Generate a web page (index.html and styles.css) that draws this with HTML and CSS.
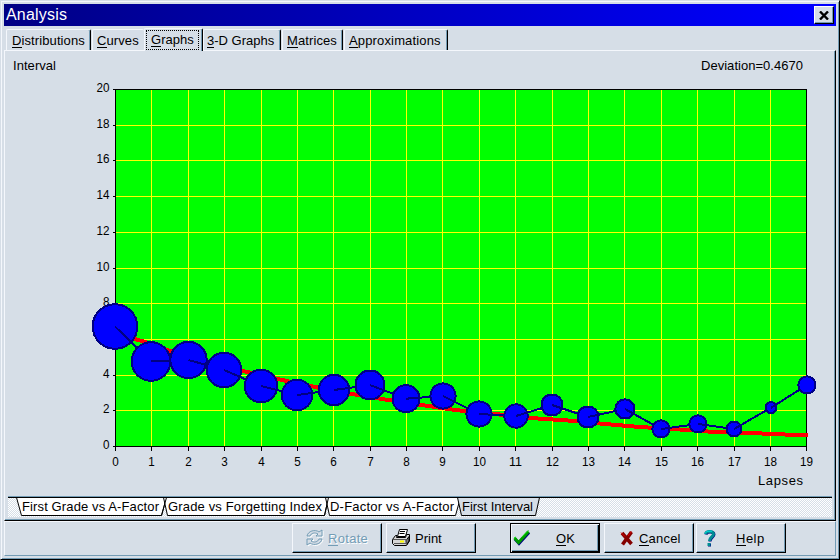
FILE: index.html
```
<!DOCTYPE html>
<html lang="en">
<head>
    <meta charset="UTF-8">
    <meta name="viewport" content="width=device-width, initial-scale=1.0">
    <title>Analysis</title>
    <link rel="stylesheet" href="styles.css">
</head>
<body>
    <div class="window">
        <header class="titlebar">
            <h1>Analysis</h1>
            <button class="close" aria-label="Close">
                <svg width="10" height="9" viewBox="0 0 10 9"><path d="M1 0.5L9 8.5M9 0.5L1 8.5" stroke="#000" stroke-width="2.4"/></svg>
            </button>
        </header>

        <nav class="tabs">
            <a class="tab distributions"><span><u>D</u>istributions</span></a>
            <a class="tab curves"><span><u>C</u>urves</span></a>
            <a class="tab graphs active"><span><u>G</u>raphs</span></a>
            <a class="tab graphs3d"><span><u>3</u>-D Graphs</span></a>
            <a class="tab matrices"><span><u>M</u>atrices</span></a>
            <a class="tab approx"><span><u>A</u>pproximations</span></a>
        </nav>

        <main class="panel">
            <svg class="chart" width="829" height="445" viewBox="5 51 829 445">
                <text x="13" y="70" textLength="43">Interval</text>
                <text x="701" y="70" textLength="102">Deviation=0.4670</text>
                <rect x="115" y="89" width="692" height="358" fill="#00ff00"/>
                <g id="grid"></g>
                <g id="axis"></g>
                <polyline class="fit" points="115,328 133,338.5 145,342 170,351 205,361 243,371 282,380 320,388 352,394 385,399.5 425,405.5 455,410 495,414 530,418 575,421 605,424 640,427 680,429.5 715,432 750,433 808,435.5"/>
                <g id="points"></g>
                <text x="758" y="485" textLength="45">Lapses</text>
            </svg>

            <svg class="sheets" width="824" height="22" viewBox="8 496 824 22">
                <defs>
                    <pattern id="dots" width="2" height="2" patternUnits="userSpaceOnUse">
                        <rect width="2" height="2" fill="#d6dee7"/>
                        <rect width="1" height="1" fill="#fff"/>
                        <rect x="1" y="1" width="1" height="1" fill="#fff"/>
                    </pattern>
                </defs>
                <rect x="8" y="498" width="824" height="19" fill="url(#dots)"/>
                <path class="sheet" d="M16.5 497.5L21.5 515.5H161.5L166.5 497.5"/>
                <path class="sheet" d="M163.5 497.5L167.5 515.5H324.5L328.5 497.5"/>
                <path class="sheet" d="M325.5 497.5L329.5 515.5H455.5L460.5 497.5"/>
                <path class="sheet current" d="M457.5 497.5L461.5 515.5H535.5L539.5 497.5"/>
                <path class="edge" d="M161.5 515.5L166.5 497.5M324.5 515.5L328.5 497.5"/>
                <path class="shade" d="M8 496.5H832"/>
                <path class="edge" d="M8 497.5H832"/>
                <text x="22" y="511" textLength="137">First Grade vs A-Factor</text>
                <text x="168" y="511" textLength="154">Grade vs Forgetting Index</text>
                <text x="330" y="511" textLength="124">D-Factor vs A-Factor</text>
                <text x="462" y="511" textLength="71">First Interval</text>
            </svg>
        </main>

        <footer class="buttons">
            <button class="btn rotate">
                <svg width="18" height="18" viewBox="0 0 18 18">
                    <g fill="none" stroke="#fff" transform="translate(1 1)">
                        <path d="M1 7C2 2 9 0 13 3L16 1V7H10L12 5C9 3 5 4 4 7ZM16 10C15 15 8 17 4 14L1 16V10H7L5 12C8 14 12 13 13 10Z"/>
                    </g>
                    <g fill="#d6dee7" stroke="#739cb5">
                        <path d="M1 7C2 2 9 0 13 3L16 1V7H10L12 5C9 3 5 4 4 7ZM16 10C15 15 8 17 4 14L1 16V10H7L5 12C8 14 12 13 13 10Z"/>
                    </g>
                </svg>
                <span><u>R</u>otate</span>
            </button>
            <button class="btn print">
                <svg width="19" height="18" viewBox="0 0 19 18">
                    <path d="M5.500 7.500L7.500 0.500H15.500L13.500 7.500Z" fill="#fff" stroke="#000"/>
                    <path d="M8 2.500H13M7.500 4.500H12.500" stroke="#000"/>
                    <path d="M0.500 10.500L3.500 6.500H5L4.500 8.500H13.500L14.500 5.500H17.500V12L14.500 16.500H2.500L0.500 14.500Z" fill="#d6d6d6" stroke="#000"/>
                    <path d="M14 11.500L17 7.500V12L14.500 16Z" fill="#808080" stroke="#000"/>
                    <path d="M1 10.500H14.500V16.500M2 14.500H14" fill="none" stroke="#555"/>
                    <path d="M8 12.500H12" stroke="#ff0" stroke-width="2"/>
                </svg>
                <span>Print</span>
            </button>
            <button class="btn ok">
                <svg width="18" height="16" viewBox="0 0 18 16">
                    <path d="M2 9L6 13.500L16 2.500" fill="none" stroke="#000080" stroke-width="3"/>
                    <path d="M1.500 8L5.500 12.500L15.500 1.500" fill="none" stroke="#009c00" stroke-width="3"/>
                    <path d="M1 8L3 7M9 7L15.500 0.500" stroke="#00e000"/>
                </svg>
                <span><u>O</u>K</span>
            </button>
            <button class="btn cancel">
                <svg width="14" height="15" viewBox="0 0 14 15">
                    <path d="M2 2L11.500 13M11.500 1L2.500 13.500" stroke="#840000" stroke-width="3.600"/>
                    <path d="M1 1.500L5 5.500M8 5L11.500 0.500" stroke="#e00000"/>
                </svg>
                <span><u>C</u>ancel</span>
            </button>
            <button class="btn help">
                <svg width="12" height="17" viewBox="0 0 12 17">
                    <path d="M2 4.500C2.500 1.500 10 1 10 4.500C10 7 6 7.500 6 11.500M4 15H7" fill="none" stroke="#000080" stroke-width="3"/>
                    <path d="M1.500 4C2 1 9.500 0.500 9.500 4C9.500 7 5.500 7 5.500 11M3.500 14.500H6.500" fill="none" stroke="#008c94" stroke-width="3"/>
                    <path d="M1 3.500L3 1.200H8" fill="none" stroke="#00e7e7"/>
                </svg>
                <span><u>H</u>elp</span>
            </button>
        </footer>
    </div>

    <script>
        // x, y and radius of each lapse group
        const points = [
            [115, 326.5, 22.3], [151, 361.5, 19.3], [188.5, 360, 18.2], [224, 370, 17.3],
            [261, 386, 16.3], [297, 395, 15.3], [334, 390, 15.2], [370, 385, 14.5],
            [406, 398.7, 13.5], [443, 396, 12.6], [479, 414, 12.6], [516, 416, 11.7],
            [552, 405, 10.5], [588, 417, 10.5], [625, 409, 9.6], [661, 429, 8.6],
            [698, 424, 8.6], [734, 429, 7.5], [771, 407.7, 5.5], [807, 385, 8.6]
        ];

        let grid = '';
        let axis = '';
        for (let i = 0; i < 20; i++) {
            const x = Math.round(115 + i * 36.4 - 0.1) + 0.5;
            const px = Math.min(x, 806.5);
            const w = i < 10 ? 6.5 : 13;
            if (i > 0 && i < 19) {
                grid += `<path d="M${px} 89V446"/>`;
            }
            axis += `<path d="M${px} 446V451"/>`;
            axis += `<text x="${px - w / 2}" y="466" textLength="${w}" lengthAdjust="spacingAndGlyphs">${i}</text>`;
        }
        for (let i = 0; i <= 10; i++) {
            const y = Math.round(446 - i * 35.7) + 0.5;
            const w = i < 5 ? 6.5 : 13;
            if (i > 0 && i < 10) {
                grid += `<path d="M115 ${y}H806"/>`;
            }
            axis += `<path d="M113 ${y}H116"/>`;
            axis += `<text x="${109.5 - w}" y="${y + 2.5}" textLength="${w}" lengthAdjust="spacingAndGlyphs">${i * 2}</text>`;
        }
        axis += '<path d="M115.5 89.5H806.5V446.5H115.5Z" fill="none"/>';

        let dots = '';
        points.forEach(function(p, i) {
            dots += `<circle cx="${p[0]}" cy="${p[1]}" r="${p[2]}"/>`;
            const next = points[i + 1];
            if (next) {
                dots += `<path d="M${p[0]} ${p[1]}L${next[0]} ${next[1]}"/>`;
            }
        });

        document.getElementById('grid').innerHTML = grid;
        document.getElementById('axis').innerHTML = axis;
        document.getElementById('points').innerHTML = dots;
    </script>
</body>
</html>
```
FILE: styles.css
```
* {
    margin: 0;
    padding: 0;
    box-sizing: border-box;
}

body {
    width: 840px;
    height: 560px;
    overflow: hidden;
    background-color: #d6dee7;
    font-family: "Liberation Sans", Arial, sans-serif;
    font-size: 13px;
    color: #000;
}

.window {
    display: flex;
    flex-direction: column;
    width: 840px;
    height: 560px;
    padding: 3px 3px 2px 2px;
    border-left: 1px solid #d6dee7;
    border-top: 1px solid #d6dee7;
    border-right: 1px solid #000;
    border-bottom: 1px solid #000;
    box-shadow: inset 1px 1px #f4f7fc, inset -1px -1px #739cb5;
}

.titlebar {
    display: flex;
    align-items: center;
    justify-content: space-between;
    width: 832px;
    height: 22px;
    margin-left: 1px;
    padding: 0 2px;
    background: linear-gradient(90deg, #000084, #0000ff 97%);
}

.titlebar h1 {
    font-size: 16px;
    font-weight: normal;
    letter-spacing: 0.2px;
    line-height: 22px;
    color: #fff;
}

.close {
    display: flex;
    align-items: center;
    justify-content: center;
    width: 20px;
    height: 18px;
    border: 1px solid #000;
    border-top-color: #fff;
    border-left-color: #fff;
    background-color: #d6dee7;
    box-shadow: inset -1px -1px #739cb5;
}

.tabs {
    display: flex;
    align-items: flex-end;
    height: 24px;
    padding-left: 3px;
}

.tab {
    display: flex;
    height: 21px;
    padding-top: 3px;
    line-height: 15px;
    white-space: nowrap;
    border-top: 1px solid #f4f7fc;
    border-left: 1px solid #f4f7fc;
    border-right: 1px solid #000;
    border-radius: 2px 2px 0 0;
    box-shadow: inset -1px 0 #739cb5;
}

u {
    text-decoration: none;
    box-shadow: 0 1px #000;
    display: inline-block;
    height: 14px;
    line-height: 15px;
}

.distributions { width: 85px; margin-right: 1px; padding-left: 5px; letter-spacing: 0.1px; }
.curves { width: 52px; border-right: none; box-shadow: none; padding-left: 4px; letter-spacing: 0.1px; }
.graphs { width: 59px; padding-left: 1px; }
.graphs3d { width: 78px; margin-right: 1px; padding-left: 3px; }
.matrices { width: 61px; margin-right: 1px; padding-left: 4px; letter-spacing: 0.1px; }
.approx { width: 104px; padding-left: 4px; letter-spacing: 0.15px; }

.tab.active {
    height: 23px;
    margin-bottom: -1px;
    padding-top: 1px;
    position: relative;
    background-color: #d6dee7;
}

.tab.active span {
    height: 20px;
    padding: 1px 4px 0;
    border: 1px dotted #000;
}

.panel {
    width: 832px;
    height: 471px;
    margin-left: 1px;
    border-top: 1px solid #f4f7fc;
    border-left: 1px solid #f4f7fc;
    border-right: 1px solid #000;
    border-bottom: 1px solid #000;
    box-shadow: inset -1px -1px #739cb5;
}

.chart {
    display: block;
    shape-rendering: crispEdges;
}

.chart #grid {
    stroke: #ffff00;
}

.chart #axis path {
    stroke: #000;
}

.chart .fit {
    fill: none;
    stroke: #ff0000;
    stroke-width: 4;
}

.chart #points {
    fill: #0000ff;
    stroke: #000084;
    stroke-width: 2;
}

.sheets {
    display: block;
    margin-left: 3px;
}

.sheet {
    fill: #fff;
    stroke: #000;
}

.sheet.current {
    fill: #d6dee7;
}

.edge {
    fill: none;
    stroke: #000;
}

.shade {
    stroke: #739cb5;
}

.buttons {
    display: flex;
    width: 832px;
    height: 35px;
    margin-left: 1px;
    padding: 2px 0 0 288px;
    border-top: 1px solid #f4f7fc;
    border-left: 1px solid #f4f7fc;
    border-right: 1px solid #739cb5;
    border-bottom: 1px solid #739cb5;
}

.btn {
    display: flex;
    align-items: center;
    width: 90px;
    height: 30px;
    margin-top: -1px;
    font: inherit;
    border: 1px solid #000;
    border-top-color: #f4f7fc;
    border-left-color: #f4f7fc;
    background-color: #d6dee7;
    box-shadow: inset -1px -1px #739cb5;
}

.rotate {
    margin-left: -1px;
    margin-right: 4px;
    padding-left: 13px;
    gap: 4px;
    color: #739cb5;
    text-shadow: 1px 1px #fff;
    letter-spacing: 0.3px;
}

.rotate u {
    box-shadow: 0 1px #739cb5;
}

.print {
    margin-right: 34px;
    padding-left: 5px;
    gap: 4px;
}

.ok {
    margin-right: 4px;
    padding-left: 2px;
    gap: 25px;
    border: 1px solid #000;
    box-shadow: inset 1px 1px #f4f7fc, inset -1px -1px #000, inset -2px -2px #739cb5;
}

.cancel {
    margin-right: 2px;
    padding-left: 15px;
    gap: 5px;
    letter-spacing: 0.2px;
}

.help {
    padding-left: 7px;
    gap: 20px;
    letter-spacing: 0.5px;
}
```
